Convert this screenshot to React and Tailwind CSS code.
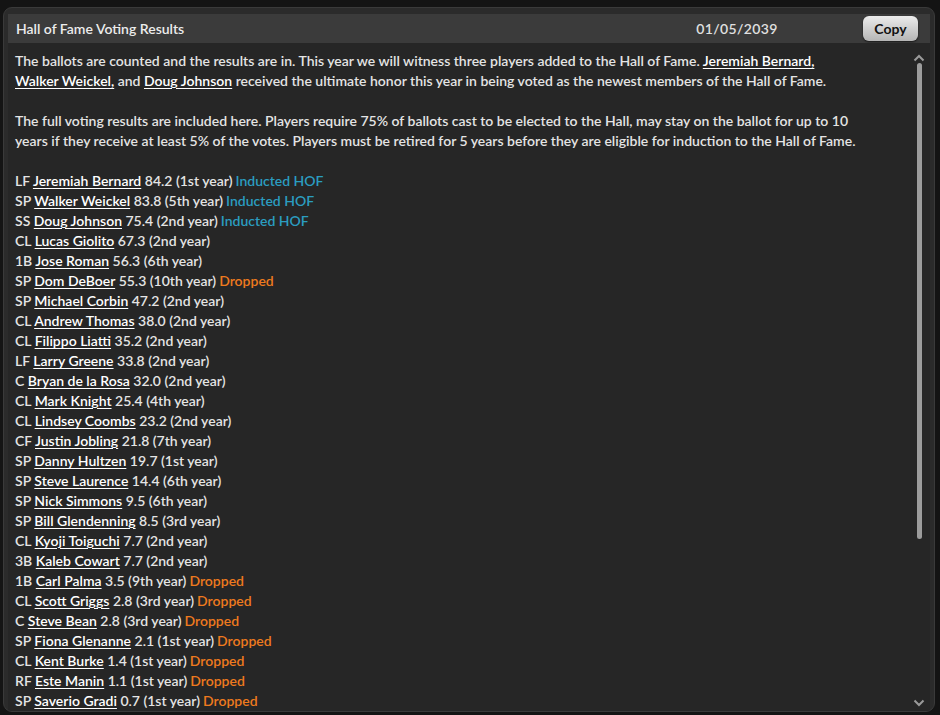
import React from 'react';

const players = [
  ['LF', 'Jeremiah Bernard', '84.2 (1st year)', 'hof'],
  ['SP', 'Walker Weickel', '83.8 (5th year)', 'hof'],
  ['SS', 'Doug Johnson', '75.4 (2nd year)', 'hof'],
  ['CL', 'Lucas Giolito', '67.3 (2nd year)'],
  ['1B', 'Jose Roman', '56.3 (6th year)'],
  ['SP', 'Dom DeBoer', '55.3 (10th year)', 'drop'],
  ['SP', 'Michael Corbin', '47.2 (2nd year)'],
  ['CL', 'Andrew Thomas', '38.0 (2nd year)'],
  ['CL', 'Filippo Liatti', '35.2 (2nd year)'],
  ['LF', 'Larry Greene', '33.8 (2nd year)'],
  ['C', 'Bryan de la Rosa', '32.0 (2nd year)'],
  ['CL', 'Mark Knight', '25.4 (4th year)'],
  ['CL', 'Lindsey Coombs', '23.2 (2nd year)'],
  ['CF', 'Justin Jobling', '21.8 (7th year)'],
  ['SP', 'Danny Hultzen', '19.7 (1st year)'],
  ['SP', 'Steve Laurence', '14.4 (6th year)'],
  ['SP', 'Nick Simmons', '9.5 (6th year)'],
  ['SP', 'Bill Glendenning', '8.5 (3rd year)'],
  ['CL', 'Kyoji Toiguchi', '7.7 (2nd year)'],
  ['3B', 'Kaleb Cowart', '7.7 (2nd year)'],
  ['1B', 'Carl Palma', '3.5 (9th year)', 'drop'],
  ['CL', 'Scott Griggs', '2.8 (3rd year)', 'drop'],
  ['C', 'Steve Bean', '2.8 (3rd year)', 'drop'],
  ['SP', 'Fiona Glenanne', '2.1 (1st year)', 'drop'],
  ['CL', 'Kent Burke', '1.4 (1st year)', 'drop'],
  ['RF', 'Este Manin', '1.1 (1st year)', 'drop'],
  ['SP', 'Saverio Gradi', '0.7 (1st year)', 'drop'],
];

function Name({ children }) {
  return <span className="underline underline-offset-2 decoration-1 text-white">{children}</span>;
}

export default function App() {
  return (
    <div
      className="w-[940px] h-[715px] bg-[#141414] pt-[7px] pl-[3px] pr-[5px] pb-[3px] overflow-hidden"
      style={{ fontFamily: 'Lato, "Noto Sans", sans-serif' }}
    >
      <div className="h-full rounded-[9px] bg-[#2b2b2b] border border-[#3a3a3a] px-[4px] pt-[6px] flex flex-col overflow-hidden">
        <div className="h-[29px] bg-[#3b3b3b] flex items-center pl-[8px] pr-[12px] shrink-0">
          <div className="text-[14px] font-semibold text-[#ececec] flex-1">Hall of Fame Voting Results</div>
          <div className="text-[14px] font-semibold text-[#e0e0e0] w-[150px] mr-[51px] text-center tracking-wide">01/05/2039</div>
          <button className="h-[25px] w-[55px] rounded-[6px] bg-gradient-to-b from-[#ececec] to-[#b5b5b5] text-[#111] text-[14px] font-bold shadow-[0_1px_2px_rgba(0,0,0,0.6)]">
            Copy
          </button>
        </div>
        <div className="flex-1 flex bg-[#262626] min-h-0">
          <div className="flex-1 pl-[7px] pt-[8px] text-[14px] leading-[20px] font-semibold text-[#e4e4e4] overflow-hidden">
            <p className="w-[842px]">
              The ballots are counted and the results are in. This year we will witness three players added to the Hall of Fame.{' '}
              <Name>Jeremiah Bernard,</Name> <Name>Walker Weickel,</Name> and <Name>Doug Johnson</Name> received the ultimate honor this year in being voted as the newest members of the Hall of Fame.
            </p>
            <p className="mt-[20px] w-[842px]">
              The full voting results are included here. Players require 75% of ballots cast to be elected to the Hall, may stay on the ballot for up to 10 years if they receive at least 5% of the votes. Players must be retired for 5 years before they are eligible for induction to the Hall of Fame.
            </p>
            <div className="mt-[20px]">
              {players.map(([pos, name, stat, tag]) => (
                <div key={name} className="whitespace-nowrap">
                  {pos} <Name>{name}</Name> {stat}
                  {tag === 'hof' && <span className="text-[#2b9dc0] ml-[3px]">Inducted HOF</span>}
                  {tag === 'drop' && <span className="text-[#ee7a1e] ml-[3px]">Dropped</span>}
                </div>
              ))}
            </div>
          </div>
          <div className="w-[16px] mr-[3px] flex flex-col items-center pt-[11px] pb-[4px]">
            <svg width="12" height="8" viewBox="0 0 12 8" className="shrink-0">
              <path d="M1.5 6.5 L6 2 L10.5 6.5" stroke="#9a9a9a" strokeWidth="2" fill="none" />
            </svg>
            <div className="w-[5px] h-[476px] mt-[1px] rounded-full bg-[#9c9c9c] shrink-0" />
            <div className="flex-1" />
            <svg width="12" height="8" viewBox="0 0 12 8" className="shrink-0">
              <path d="M1.5 1.5 L6 6 L10.5 1.5" stroke="#9a9a9a" strokeWidth="2" fill="none" />
            </svg>
          </div>
        </div>
      </div>
    </div>
  );
}
